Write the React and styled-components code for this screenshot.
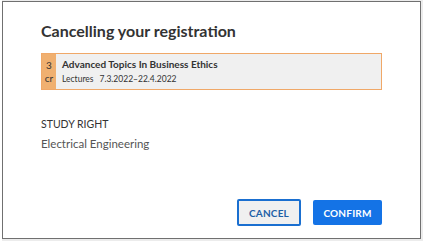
import React from "react";
import styled, { createGlobalStyle } from "styled-components";

const GlobalStyle = createGlobalStyle`
  html, body {
    margin: 0;
    padding: 0;
    background: #ececec;
  }
  body {
    font-family: Lato, "Noto Sans", sans-serif;
    color: #333;
  }
`;

function App() {
  return (
    <>
      <GlobalStyle />
      <Page>
        <Dialog>
          <Title>Cancelling your registration</Title>
          <CourseCard>
            <Credits>
              <span>3</span>
              <span>cr</span>
            </Credits>
            <CourseInfo>
              <CourseName>Advanced Topics In Business Ethics</CourseName>
              <CourseMeta>
                <span>Lectures</span>
                <span>7.3.2022–22.4.2022</span>
              </CourseMeta>
            </CourseInfo>
          </CourseCard>
          <Section>
            <Label>STUDY RIGHT</Label>
            <Value>Electrical Engineering</Value>
          </Section>
          <Actions>
            <Button>CANCEL</Button>
            <Button primary>CONFIRM</Button>
          </Actions>
        </Dialog>
      </Page>
    </>
  );
}

// STYLED COMPONENTS

const Page = styled.div`
  width: 423px;
  height: 241px;
  padding: 1px 0 0 2px;
  box-sizing: border-box;
  background: linear-gradient(to right, #fff 0, #fff 2px, transparent 2px);
`;

const Dialog = styled.div`
  width: 419px;
  height: 238px;
  box-sizing: border-box;
  border: 1px solid #707070;
  background: #fff;
  padding: 19px 38px 12px 38px;
  display: flex;
  flex-direction: column;
`;

const Title = styled.h2`
  margin: 0;
  font-size: 16px;
  font-weight: 700;
  line-height: 20px;
  color: #333;
`;

const CourseCard = styled.div`
  margin-top: 12px;
  display: flex;
  height: 37px;
  box-sizing: border-box;
  border: 1px solid #f0a868;
  background: #f0f0f0;
`;

const Credits = styled.div`
  width: 14px;
  background: #f0b070;
  display: flex;
  flex-direction: column;
  align-items: center;
  justify-content: center;
  font-size: 10px;
  line-height: 13px;
  color: #333;
`;

const CourseInfo = styled.div`
  padding: 3px 0 0 6px;
  display: flex;
  flex-direction: column;
`;

const CourseName = styled.div`
  font-size: 10px;
  font-weight: 700;
  line-height: 15px;
`;

const CourseMeta = styled.div`
  font-size: 8.5px;
  line-height: 14px;
  display: flex;
  gap: 6px;
`;

const Section = styled.div`
  margin-top: 28px;
  display: flex;
  flex-direction: column;
  gap: 6px;
`;

const Label = styled.div`
  font-size: 10.5px;
  line-height: 13px;
  color: #333;
`;

const Value = styled.div`
  font-size: 11.5px;
  line-height: 14px;
  color: #555;
`;

const Actions = styled.div`
  margin-top: auto;
  display: flex;
  justify-content: flex-end;
  gap: 12px;
  align-items: center;
`;

const Button = styled.button`
  height: ${(p) => (p.primary ? "25px" : "27px")};
  width: ${(p) => (p.primary ? "69px" : "64px")};
  padding: 0;
  font-family: Lato, "Noto Sans", sans-serif;
  font-size: 10px;
  font-weight: 700;
  letter-spacing: 0.2px;
  cursor: pointer;
  border-radius: 2px;
  border: ${(p) => (p.primary ? "none" : "2px solid #1a6fd0")};
  background: ${(p) => (p.primary ? "#1473e6" : "#f0f0f0")};
  color: ${(p) => (p.primary ? "#fff" : "#1d5fa6")};
`;

export default App;
